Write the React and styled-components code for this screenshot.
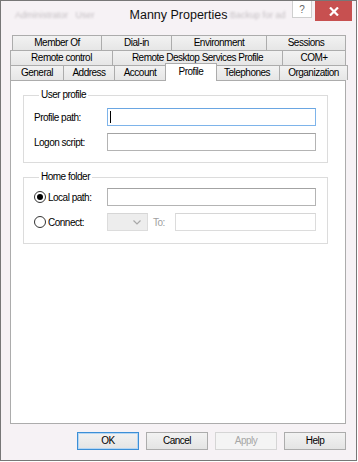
import React from 'react'
import styled, { createGlobalStyle } from 'styled-components'

const Global = createGlobalStyle`
  html, body { margin: 0; padding: 0; background: #fff; }
  body {
    font-family: "Liberation Sans", Arial, sans-serif;
    font-size: 10px;
    letter-spacing: -0.5px;
    color: #000;
  }
  * { box-sizing: border-box; }
`

const Window = styled.div`
  width: 357px;
  height: 461px;
  border: 1px solid #777;
  background: #f6f2f5;
  display: flex;
  flex-direction: column;
`

const TitleBar = styled.div`
  height: 28px;
  display: grid;
  grid-template-columns: 1fr auto 1fr;
  align-items: start;
`

const Ghost = styled.div`
  line-height: 28px;
  padding-left: ${p => p.pl || 0}px;
  color: #c4bfc3;
  font-size: 9px;
  letter-spacing: 0;
  filter: blur(0.9px);
  white-space: nowrap;
  overflow: hidden;
`

const Title = styled.div`
  font-size: 12.5px;
  letter-spacing: 0;
  line-height: 28px;
  color: #111;
`

const Controls = styled.div`
  display: flex;
  justify-content: flex-end;
  padding-right: 4px;
`

const HelpBtn = styled.div`
  width: 20px;
  height: 17px;
  margin-right: 3px;
  border: 1px solid #cfcfcf;
  border-top: none;
  background: #fff;
  color: #666;
  font-size: 10px;
  letter-spacing: 0;
  display: flex;
  align-items: center;
  justify-content: center;
`

const CloseBtn = styled.div`
  width: 37px;
  height: 20px;
  background: #c75050;
  display: flex;
  align-items: center;
  justify-content: center;
`

const Body = styled.div`
  padding: 6px 10px 0 9px;
  display: flex;
  flex-direction: column;
`

const TabRow = styled.div`
  display: flex;
  height: 15px;
  padding-left: ${p => p.indent || 0}px;
`

const Tab = styled.div`
  width: ${p => p.w + 1}px;
  height: 15px;
  flex: none;
  border: 1px solid #acacac;
  border-bottom: none;
  background: linear-gradient(#f2f2f2, #e6e6e6);
  text-align: center;
  line-height: 14px;
  white-space: nowrap;
  & + & { margin-left: -1px; }
`

const ActiveTab = styled(Tab)`
  position: relative;
  z-index: 2;
  width: ${p => p.w + 5}px;
  height: 18px;
  margin: -2px -2px -1px -3px;
  background: #fff;
  line-height: 16px;
`

const Panel = styled.div`
  height: 344px;
  background: #fff;
  border: 1px solid #acacac;
  padding: 8px 17px 0 12px;
`

const Group = styled.fieldset`
  margin: ${p => p.mt || 0}px 0 0 0;
  padding: ${p => p.pt}px 11px ${p => p.pb}px 10px;
  border: 1px solid #dcdcdc;
  min-width: 0;
  display: flex;
  flex-direction: column;
  gap: 7px;
`

const Legend = styled.legend`
  margin-left: 5px;
  padding: 0 2px;
  line-height: 12px;
`

const Row = styled.div`
  display: flex;
  align-items: center;
  height: 18px;
`

const Label = styled.div`
  width: 73px;
  flex: none;
`

const RadioLabel = styled.label`
  width: 73px;
  flex: none;
  display: flex;
  align-items: center;
  gap: 2px;
`

const Radio = styled.span`
  width: 12px;
  height: 12px;
  border-radius: 50%;
  border: 1px solid #333;
  background: #fff;
  display: flex;
  align-items: center;
  justify-content: center;
  &::after {
    content: "";
    width: 6px;
    height: 6px;
    border-radius: 50%;
    background: ${p => (p.checked ? '#000' : 'transparent')};
  }
`

const Field = styled.div`
  flex: ${p => (p.w ? 'none' : 1)};
  width: ${p => (p.w ? `${p.w}px` : 'auto')};
  height: 18px;
  background: ${p => (p.off ? '#ededed' : '#fff')};
  border: 1px solid ${p => (p.focus ? '#7eb4ea' : p.dim ? '#dcdcdc' : '#b4b4b4')};
  border-top-color: ${p => (p.focus ? '#6aa6e2' : p.dim ? '#d6d6d6' : '#a3a3a3')};
  display: flex;
  align-items: center;
  justify-content: ${p => (p.off ? 'flex-end' : 'flex-start')};
  padding: 0 ${p => (p.off ? 6 : 2)}px;
`

const Caret = styled.span`
  width: 1px;
  height: 12px;
  background: #000;
`

const ToLabel = styled.span`
  color: #a0a0a0;
  margin: 0 10px 0 5px;
`

const Buttons = styled.div`
  margin-top: 8px;
  display: flex;
  justify-content: flex-end;
  gap: 7px;
`

const Button = styled.div`
  width: 62px;
  height: 18px;
  border: 1px solid ${p => (p.primary ? '#3c8fd6' : p.disabled ? '#d5d5d5' : '#acacac')};
  background: ${p => (p.disabled ? '#f4f4f4' : 'linear-gradient(#f2f2f2, #e4e4e4)')};
  color: ${p => (p.disabled ? '#a6a6a6' : '#000')};
  box-shadow: ${p => (p.primary ? 'inset 0 0 0 1px #b5d6f3' : 'none')};
  text-align: center;
  line-height: 16px;
`

const row1 = [['Member Of', 89], ['Dial-in', 70], ['Environment', 95], ['Sessions', 79]]
const row2 = [['Remote control', 102], ['Remote Desktop Services Profile', 170], ['COM+', 63]]
const row3 = [['General', 53], ['Address', 51], ['Account', 51], ['Profile', 47, true], ['Telephones', 65], ['Organization', 68]]

const renderTabs = tabs =>
  tabs.map(([name, w, active]) =>
    active ? <ActiveTab key={name} w={w}>{name}</ActiveTab> : <Tab key={name} w={w}>{name}</Tab>
  )

export default function App() {
  return (
    <>
      <Global />
      <Window>
        <TitleBar>
          <Ghost pl={14}>Administrator&nbsp;&nbsp; User</Ghost>
          <Title>Manny Properties</Title>
          <Controls>
            <Ghost style={{ flex: 1 }}>&nbsp;Backup for ad</Ghost>
            <HelpBtn>?</HelpBtn>
            <CloseBtn>
              <svg width="10" height="9" viewBox="0 0 10 9">
                <path d="M1 0.5 L9 8.5 M9 0.5 L1 8.5" stroke="#fff" strokeWidth="2.2" />
              </svg>
            </CloseBtn>
          </Controls>
        </TitleBar>
        <Body>
          <TabRow indent={2}>{renderTabs(row1)}</TabRow>
          <TabRow>{renderTabs(row2)}</TabRow>
          <TabRow>{renderTabs(row3)}</TabRow>
          <Panel>
            <Group pt={7} pb={11}>
              <Legend>User profile</Legend>
              <Row>
                <Label>Profile path:</Label>
                <Field focus><Caret /></Field>
              </Row>
              <Row>
                <Label>Logon script:</Label>
                <Field />
              </Row>
            </Group>
            <Group mt={8} pt={5} pb={12}>
              <Legend>Home folder</Legend>
              <Row>
                <RadioLabel><Radio checked />Local path:</RadioLabel>
                <Field />
              </Row>
              <Row>
                <RadioLabel><Radio />Connect:</RadioLabel>
                <Field w={41} off dim>
                  <svg width="8" height="5" viewBox="0 0 8 5">
                    <path d="M0.5 0.5 L4 4 L7.5 0.5" fill="none" stroke="#a8a8a8" strokeWidth="1.2" />
                  </svg>
                </Field>
                <ToLabel>To:</ToLabel>
                <Field dim />
              </Row>
            </Group>
          </Panel>
          <Buttons>
            <Button primary>OK</Button>
            <Button>Cancel</Button>
            <Button disabled>Apply</Button>
            <Button>Help</Button>
          </Buttons>
        </Body>
      </Window>
    </>
  )
}
